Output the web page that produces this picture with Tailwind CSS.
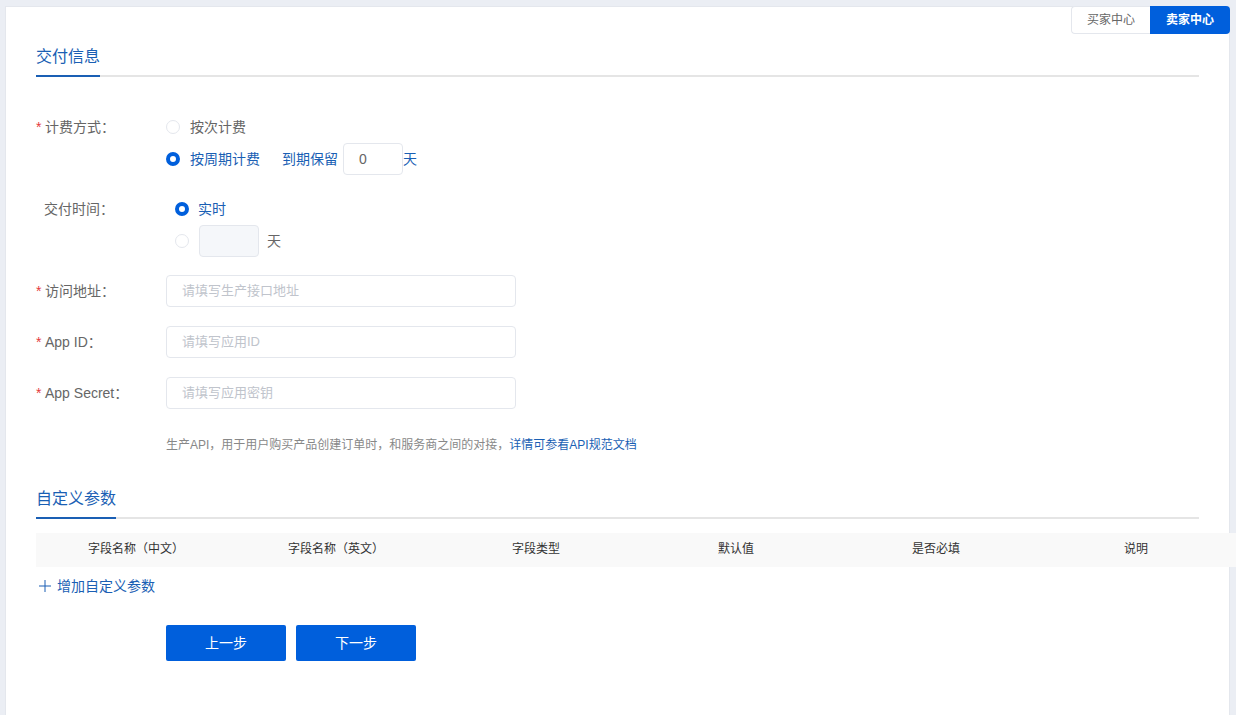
<!DOCTYPE html>
<html lang="zh-CN">
<head>
    <meta charset="UTF-8">
    <title>交付信息</title>
    <script src="https://cdn.jsdelivr.net/npm/@tailwindcss/browser@4"></script>
</head>
<body class="bg-[#ebeef4] h-[715px] overflow-hidden font-['Liberation_Sans','Noto_Sans_CJK_SC',sans-serif] text-[14px] text-[#666]">
    <div class="relative ml-[5px] mt-[6px] w-[1225px] h-[720px] bg-white border border-[#e4e7ed] pl-[30px] pr-[30px] pt-[28px]">

        <!-- buyer / seller switch -->
        <div class="absolute top-[-1px] right-[-1px] flex text-[12px] h-[28px]">
            <div class="w-[79px] flex items-center justify-center border border-[#e4e7ed] border-r-0 rounded-l-[4px] bg-white">买家中心</div>
            <div class="w-[80px] flex items-center justify-center bg-[#005fdc] text-white font-bold rounded-r-[4px]">卖家中心</div>
        </div>

        <!-- section title -->
        <div class="h-[42px] border-b-2 border-[#e5e5e5]">
            <div class="w-[64px] h-[42px] border-b-2 border-[#1a5fb4] text-[16px] leading-[44px] text-[#1a5fb4]">交付信息</div>
        </div>

        <!-- billing -->
        <div class="flex mt-[34px]">
            <div class="w-[130px] h-[32px] leading-[32px]"><span class="inline-block w-[9px] text-[#e4393c]">*</span>计费方式&#xFF1A;</div>
            <div>
                <div class="flex items-center h-[32px]">
                    <span class="w-[14px] h-[14px] rounded-full border border-[#e4e7ed] mr-[10px]"></span>
                    <span>按次计费</span>
                </div>
                <div class="flex items-center h-[32px] text-[#1a5fb4]">
                    <span class="w-[14px] h-[14px] rounded-full border-[4px] border-[#005fdc] mr-[10px]"></span>
                    <span class="mr-[22px]">按周期计费</span>
                    <span class="mr-[5px]">到期保留</span>
                    <div class="w-[60px] h-[32px] border border-[#e4e7ed] rounded-[4px] pl-[15px] leading-[30px] text-[#666] bg-white">0</div>
                    <span>天</span>
                </div>
            </div>
        </div>

        <!-- delivery time -->
        <div class="flex mt-[18px]">
            <div class="w-[139px] h-[32px] leading-[32px] pl-[8px]">交付时间&#xFF1A;</div>
            <div>
                <div class="flex items-center h-[32px] text-[#1a5fb4]">
                    <span class="w-[14px] h-[14px] rounded-full border-[4px] border-[#005fdc] mr-[9px]"></span>
                    <span>实时</span>
                </div>
                <div class="flex items-center h-[32px]">
                    <span class="w-[14px] h-[14px] rounded-full border border-[#e4e7ed] mr-[10px]"></span>
                    <div class="w-[60px] h-[32px] border border-[#e4e7ed] rounded-[4px] bg-[#f5f7fa] mr-[8px]"></div>
                    <span>天</span>
                </div>
            </div>
        </div>

        <!-- access fields -->
        <div class="flex mt-[18px] items-center h-[32px]">
            <div class="w-[130px]"><span class="inline-block w-[9px] text-[#e4393c]">*</span>访问地址&#xFF1A;</div>
            <div class="w-[350px] h-[32px] border border-[#e4e7ed] rounded-[4px] pl-[15px] leading-[30px] text-[13px] text-[#c0c4cc]">请填写生产接口地址</div>
        </div>
        <div class="flex mt-[19px] items-center h-[32px]">
            <div class="w-[130px]"><span class="inline-block w-[9px] text-[#e4393c]">*</span>App ID&#xFF1A;</div>
            <div class="w-[350px] h-[32px] border border-[#e4e7ed] rounded-[4px] pl-[15px] leading-[30px] text-[13px] text-[#c0c4cc]">请填写应用ID</div>
        </div>
        <div class="flex mt-[19px] items-center h-[32px]">
            <div class="w-[130px]"><span class="inline-block w-[9px] text-[#e4393c]">*</span>App Secret&#xFF1A;</div>
            <div class="w-[350px] h-[32px] border border-[#e4e7ed] rounded-[4px] pl-[15px] leading-[30px] text-[13px] text-[#c0c4cc]">请填写应用密钥</div>
        </div>

        <p class="ml-[130px] mt-[27px] h-[18px] text-[12px] leading-[18px] text-[#888]">生产API&#xFF0C;用于用户购买产品创建订单时&#xFF0C;和服务商之间的对接&#xFF0C;<span class="text-[#1a5fb4]">详情可参看API规范文档</span></p>

        <!-- custom params -->
        <div class="h-[42px] mt-[23px] border-b-2 border-[#e5e5e5]">
            <div class="w-[80px] h-[42px] border-b-2 border-[#1a5fb4] text-[16px] leading-[44px] text-[#1a5fb4]">自定义参数</div>
        </div>
        <div class="flex w-[1200px] h-[34px] mt-[14px] bg-[#f9f9f9] text-[12px] text-[#333] leading-[32px] text-center relative">
            <div class="w-[200px]">字段名称&#xFF08;中文&#xFF09;</div>
            <div class="w-[200px]">字段名称&#xFF08;英文&#xFF09;</div>
            <div class="w-[200px]">字段类型</div>
            <div class="w-[200px]">默认值</div>
            <div class="w-[200px]">是否必填</div>
            <div class="w-[200px]">说明</div>
        </div>
        <div class="flex items-center h-[38px] text-[#1a5fb4]">
            <svg class="ml-[3px] mr-[6px]" width="12" height="12" viewBox="0 0 12 12" fill="none" stroke="#1a5fb4" stroke-width="1"><path d="M6 0v12M0 6h12"/></svg>
            <span>增加自定义参数</span>
        </div>

        <!-- actions -->
        <div class="flex gap-[10px] ml-[130px] mt-[20px]">
            <button class="w-[120px] h-[36px] bg-[#005fdc] text-white rounded-[2px]">上一步</button>
            <button class="w-[120px] h-[36px] bg-[#005fdc] text-white rounded-[2px]">下一步</button>
        </div>
    </div>
</body>
</html>
